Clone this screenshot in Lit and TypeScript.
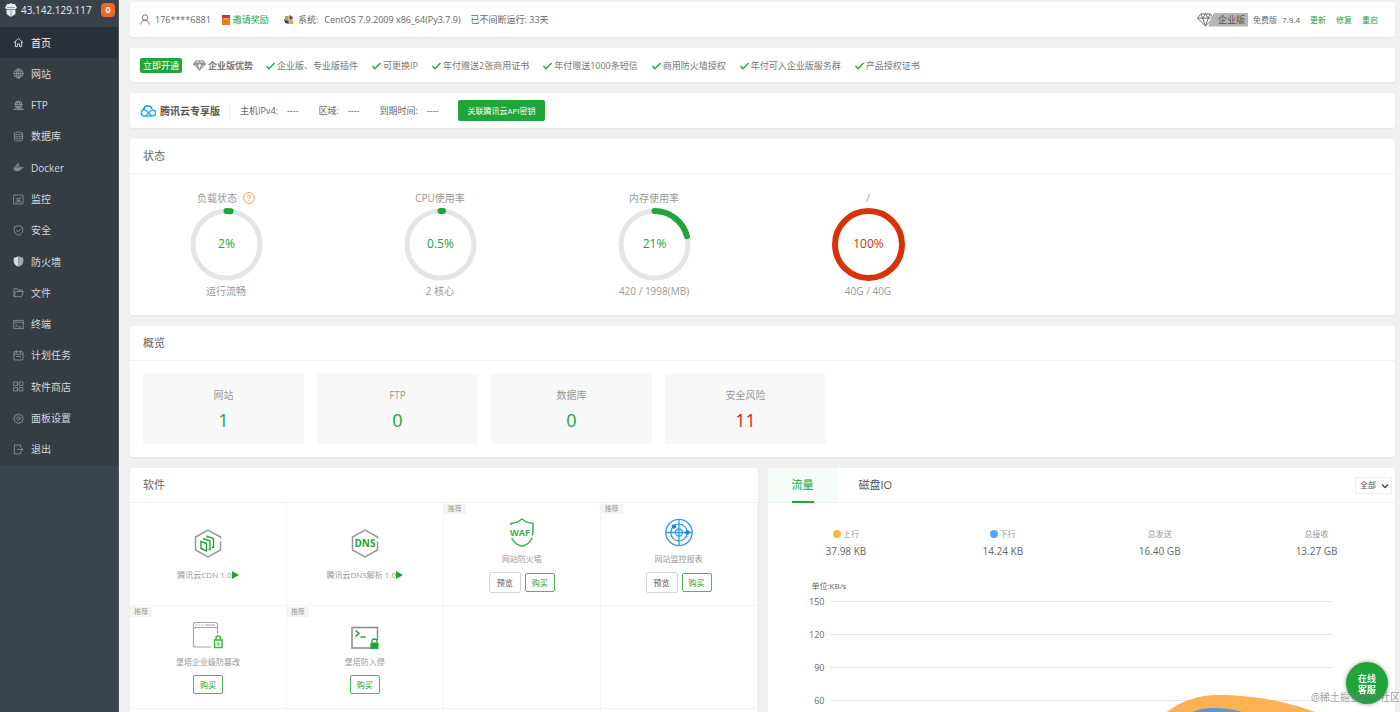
import { LitElement, html, svg, css } from "lit";
import { customElement, property, state } from "lit/decorators.js";
import { classMap } from "lit/directives/class-map.js";

const stroke = (body: unknown) => html`<svg viewBox="0 0 16 16" fill="none" stroke="currentColor" stroke-width="1.4" stroke-linejoin="round" stroke-linecap="round" aria-hidden="true">${body}</svg>`;

const menu = [
  { label: "首页", icon: stroke(svg`<path d="M1.500 8 8 2l6.500 6M3.500 7v7h3v-4h3v4h3V7"/>`) },
  { label: "网站", icon: stroke(svg`<circle cx="8" cy="8" r="6.500"/><ellipse cx="8" cy="8" rx="3" ry="6.500"/><path d="M1.500 8h13M8 1.500v13M2.500 4.500h11M2.500 11.500h11"/>`) },
  { label: "FTP", icon: stroke(svg`<circle cx="8" cy="6.500" r="5"/><ellipse cx="8" cy="6.500" rx="2.200" ry="5"/><path d="M3 6.500h10M3.500 4h9M4 9.500h8M1 13.800h14M3 11.800h10"/>`) },
  { label: "数据库", icon: stroke(svg`<ellipse cx="8" cy="3.500" rx="6" ry="2"/><path d="M2 3.500v9c0 1.200 2.700 2 6 2s6-.8 6-2v-9M2 6.500c0 1.200 2.700 2 6 2s6-.8 6-2M2 9.500c0 1.200 2.700 2 6 2s6-.8 6-2"/>`) },
  { label: "Docker", icon: html`<svg viewBox="0 0 16 16" fill="currentColor" aria-hidden="true"><path d="M.5 8.500h11.200c.5-.8.4-1.800 0-2.500.9.300 1.300.9 1.500 1.500.8-.3 1.800-.2 2.500.3-.5 1-1.600 1.400-2.700 1.300C11.800 12 9.500 13.500 6 13.500 2.500 13.500.7 11.800.5 8.500zM2 6h2v2H2zm2.300 0h2v2h-2zm2.300 0h2v2h-2zm2.300 0h2v2h-2zM4.300 3.800h2v2h-2zm2.300 0h2v2h-2zm0-2.300h2v2h-2z"/></svg>` },
  { label: "监控", icon: stroke(svg`<rect x="1.500" y="1.500" width="13" height="13"/><path d="M4 11.500h8M5 8l2-2.500L9 8l2-3M6 9.500h4"/>`) },
  { label: "安全", icon: stroke(svg`<path d="M8 1.200 14 3v5c0 3.300-2.500 5.600-6 7-3.500-1.400-6-3.700-6-7V3z"/><path d="m5 7.800 2.300 2.300L11.200 6"/>`) },
  { label: "防火墙", icon: html`<svg class="bright" viewBox="0 0 16 16" aria-hidden="true"><path fill="#d8dadb" d="M8 .5 1 3v5c0 3.800 3 6.300 7 7.800z"/><path fill="#a5a9ac" d="M8 .5 15 3v5c0 3.800-3 6.300-7 7.800z"/></svg>` },
  { label: "文件", icon: stroke(svg`<path d="M1.500 13.500v-11h4.500l1.500 2h6v2M1.500 13.500l2.500-7h11l-2 7z"/>`) },
  { label: "终端", icon: stroke(svg`<rect x="1" y="2" width="14" height="12"/><path d="M1 4.800h14M3.500 7.500l2.500 2-2.500 2M8 11.500h4"/>`) },
  { label: "计划任务", icon: stroke(svg`<rect x="1.500" y="2.500" width="13" height="12" rx="1"/><path d="M1.500 6h13M5 1v3M11 1v3M5 9.500h6"/>`) },
  { label: "软件商店", icon: stroke(svg`<rect x="1.500" y="1.500" width="5" height="5"/><rect x="9.500" y="1.500" width="5" height="5"/><rect x="1.500" y="9.500" width="5" height="5"/><rect x="9.500" y="9.500" width="5" height="5"/>`) },
  { label: "面板设置", icon: stroke(svg`<path d="M6.500 1.500h3l.6 1.800 1.900-.6 1.700 1.700-.7 1.900 1.700.6v3l-1.700.5.7 1.900-1.700 1.700-1.900-.7-.6 1.700h-3l-.6-1.700-1.900.7-1.700-1.700.7-1.900L1.300 9.900v-3L3 6.300l-.7-1.900L4 2.700l1.900.6z"/><circle cx="8" cy="8" r="2.300"/>`) },
  { label: "退出", icon: stroke(svg`<path d="M11 4.500V1.500H2v13h9v-3M6.500 8h8M12 5.500 14.500 8 12 10.500"/>`) },
];

const perks = ["企业版、专业版插件", "可更换IP", "年付赠送2张商用证书", "年付赠送1000条短信", "商用防火墙授权", "年付可入企业版服务群", "产品授权证书"];

const hosts = [["主机IPv4:", "----"], ["区域:", "----"], ["到期时间:", "----"]];

const gauges = [
  { title: "负载状态", help: true, text: "2%", value: 2, note: "运行流畅" },
  { title: "CPU使用率", text: "0.5%", value: 0.5, note: "2 核心" },
  { title: "内存使用率", text: "21%", value: 21, note: "420 / 1998(MB)" },
  { title: "/", text: "100%", value: 100, note: "40G / 40G" },
];

const counts = [
  { label: "网站", value: 1 },
  { label: "FTP", value: 0 },
  { label: "数据库", value: 0 },
  { label: "安全风险", value: 11, alert: true },
];

const hexagon = svg`<path d="M26.500 9.500V8L14 1 1.500 8v13L14 28l12.500-7v-8.500" fill="none" stroke="#999" stroke-width="1.500"/>`;

const apps = [
  {
    name: "腾讯云CDN 1.0", running: true,
    icon: html`<svg viewBox="0 0 28 29" aria-hidden="true">${hexagon}<g fill="none" stroke="#20a53a" stroke-width="1.400"><path d="M7 12.500 12.500 14.500v7.500L7 19.500z"/><path d="M10 11V9.800L16 12v8.500h-1.500M13 8.500V7.200L19.500 9.500v9H18"/></g></svg>`,
  },
  {
    name: "腾讯云DNS解析 1.0", running: true,
    icon: html`<svg viewBox="0 0 28 29" aria-hidden="true">${hexagon}<text x="14" y="18.300" text-anchor="middle" font-size="10" font-weight="700" fill="#20a53a">DNS</text></svg>`,
  },
  {
    name: "网站防火墙", badge: true, preview: true, buy: true,
    icon: html`<svg viewBox="0 0 28 29" aria-hidden="true"><g fill="none" stroke="#3fae54" stroke-width="1.500"><path d="M3 7V5.500C7.500 5 11 3.500 14 1c3 2.500 6.500 4 11 4.500 0 5 .2 9-.7 12"/><path d="M3.800 20C5.500 24 9.500 27 14 28.300c4.500-1.300 8.500-4.300 10.300-8.500"/></g><text x="12" y="17.800" text-anchor="middle" font-size="9" font-weight="700" fill="#3fae54">WAF</text></svg>`,
  },
  {
    name: "网站监控报表", badge: true, preview: true, buy: true,
    icon: html`<svg viewBox="0 0 28 29" aria-hidden="true"><g fill="none" stroke="#2f9be0" stroke-width="1.300"><circle cx="14" cy="14.500" r="13.200"/><circle cx="14" cy="14.500" r="8.300"/><circle cx="14" cy="14.500" r="3.500"/><path d="M14 1v27M1 14.500h26"/></g><circle cx="9" cy="8.500" r="2.200" fill="#2184cf"/><circle cx="22.500" cy="14.500" r="2.200" fill="#2184cf"/></svg>`,
  },
  {
    name: "堡塔企业级防篡改", badge: true, buy: true,
    icon: html`<svg class="wide" viewBox="0 0 31 28" aria-hidden="true"><g fill="none" stroke="#a5a5ad" stroke-width="1.200"><path d="M19 25.500H3.500q-2 0-2-2V3q0-2 2-2h20q2 0 2 2v9M1.500 6h24"/><path d="M4 3.500h1.500M7 3.500h1.500M10 3.500h1.500M13 3.500h10"/></g><g fill="none" stroke="#3dbb3d" stroke-width="1.500"><rect x="22.500" y="18.500" width="7.500" height="7.500"/><path d="M24 18.500v-2q0-2 2.200-2t2.200 2v2M26.200 21v3"/></g></svg>`,
  },
  {
    name: "堡塔防入侵", badge: true, buy: true,
    icon: html`<svg viewBox="0 0 28 29" aria-hidden="true"><path d="M20 27H1V6.500h25.500V19" fill="none" stroke="#8b8b8b" stroke-width="1.500"/><path d="m4.500 9.500 3.500 3-3.500 3M9.500 16h5" fill="none" stroke="#20a53a" stroke-width="1.600"/><path d="M19.500 21.500h8V28h-8z" fill="#20a53a"/><path d="M21 21.500V20q0-2 2.500-2t2.500 2v1.500" fill="none" stroke="#20a53a" stroke-width="1.300"/></svg>`,
  },
];

const traffic = [
  { label: "上行", value: "37.98 KB", tone: "up" },
  { label: "下行", value: "14.24 KB", tone: "down" },
  { label: "总发送", value: "16.40 GB" },
  { label: "总接收", value: "13.27 GB" },
];

const sansStack = css`"Open Sans", "Noto Sans CJK SC", sans-serif`;

@customElement("usage-gauge")
class UsageGauge extends LitElement {
  @property({ type: Number }) value = 0;
  @property() text = "";

  static styles = css`
    :host { display: block; width: 73px; height: 73px; }
    svg { display: block; width: 100%; height: 100%; }
    .track { fill: none; stroke: #e5e5e5; stroke-width: 5; }
    .arc { fill: none; stroke: #20a53a; stroke-width: 6; stroke-linecap: round; }
    .full { stroke: #d9320a; }
    text { font-family: ${sansStack}; font-size: 12px; fill: #20a53a; text-anchor: middle; }
    .hot { fill: #d9320a; }
  `;

  render() {
    const full = this.value >= 100;
    const length = Math.max(this.value, 1.2);
    return html`<svg viewBox="0 0 73 73" role="img" aria-label=${this.text}>
      <circle class="track" cx="36.5" cy="36.5" r="33.5"></circle>
      <circle class=${classMap({ arc: true, full })} cx="36.5" cy="36.5" r="33.5" pathLength="100"
        stroke-dasharray="${length} ${100 - length}" transform="rotate(-90 36.5 36.5)"></circle>
      <text class=${classMap({ hot: full })} x="36.5" y="40">${this.text}</text>
    </svg>`;
  }
}

@customElement("app-root")
class AppRoot extends LitElement {
  @state() active = "首页";
  @state() tab = "流量";

  static styles = css`
    :host {
      display: grid; grid-template-columns: 119px minmax(0, 1fr); height: 100vh; overflow: hidden;
      background: #f0f0f0; color: #666; font: 9px/14px ${sansStack};
    }
    * { box-sizing: border-box; }
    a { color: inherit; text-decoration: none; }
    button, select { font: inherit; cursor: pointer; }
    svg { display: block; flex: none; }
    h2 { margin: 0; font-size: 11px; font-weight: 400; }

    .side { background: #3c444d; color: #d5d8da; border-right: 1px solid #51585e; }
    .brand { display: flex; align-items: center; height: 27px; padding: 0 3px 8px 5px; font-size: 10px; color: #eceeef; background: #3a4249; }
    .brand svg { width: 12px; height: 14px; margin-right: 4px; }
    .brand .count { margin-left: auto; width: 14px; height: 14px; border-radius: 4px; background: #f0692a; color: #fff; font-size: 9px; font-weight: 700; text-align: center; }
    .menu { display: flex; flex-direction: column; height: 438px; background: #353d43; }
    .menu a { flex: 1; display: flex; align-items: center; gap: 7px; padding-left: 13px; font-size: 10px; }
    .menu svg { width: 11px; height: 11px; opacity: .5; }
    .menu .bright { opacity: 1; }
    .menu .current { background: #2a3138; color: #f4f5f5; }
    .menu .current svg { opacity: .85; }

    .main { display: flex; flex-direction: column; gap: 11px; padding: 2px 5px 0 11px; overflow-y: auto; scrollbar-width: none; }
    .card { flex: none; background: #fff; border-radius: 3px; box-shadow: 0 1px 2px #0000000d; }
    .line { display: flex; align-items: center; padding: 0 10px; white-space: nowrap; }
    .head { display: flex; align-items: center; height: 35px; padding: 0 13px; border-bottom: 1px solid #f2f2f2; }

    .info { height: 35px; padding-right: 17px; }
    .info .item { display: flex; align-items: center; }
    .info .user { gap: 5px; margin-right: 11px; }
    .info .invite { gap: 3px; margin-right: 15px; color: #20a53a; }
    .info .system { gap: 4px; margin-right: 10px; }
    .info .system .os { margin-left: 2px; }
    .info .edition { margin-left: auto; font-size: 8px; }
    .info .tier { height: 14px; padding: 0 3px 0 10px; margin-left: -6px; background: #b5b5b5; clip-path: polygon(6px 0, 100% 0, 100% 100%, 0 100%); color: #555; font-size: 9px; }
    .info .free { margin: 0 5px; }
    .info .edition a { margin-left: 10px; color: #20a53a; }

    .promo { height: 34px; padding-top: 1px; color: #777; }
    .open { height: 15px; padding: 0 3px; border: 0; border-radius: 2px; background: #20a53a; color: #fff; line-height: 15px; }
    .adv { display: flex; align-items: center; gap: 2px; margin: 0 13px 0 11px; font-weight: 700; }
    .perks { display: flex; gap: 14px; margin: 0; padding: 0; list-style: none; }
    .perks li { display: flex; align-items: center; gap: 2px; }

    .cloud { height: 35px; }
    .cloud strong { font-size: 10px; padding: 0 9px 0 4px; border-right: 1px solid #eee; margin-right: 10px; color: #555; }
    .cloud .host { display: flex; gap: 9px; margin-right: 20px; }
    .bind { height: 21px; padding: 0 9px; border: 0; border-radius: 2px; background: #20a53a; color: #fff; font-size: 8px; }

    .gauges { display: flex; gap: 22px; height: 141px; padding-top: 16px; color: #999; font-size: 10px; line-height: 16px; }
    .gauge { width: 192px; display: flex; flex-direction: column; align-items: center; gap: 2px; }
    .gauge .name { display: flex; align-items: center; gap: 6px; }

    .counts { display: flex; gap: 13px; padding: 13px; height: 96px; }
    .count-box { width: 161px; height: 70px; padding-top: 12px; background: #f8f8f8; text-align: center; color: #999; font-size: 10px; line-height: 18px; }
    .count-box .num { display: block; margin-top: 4px; font-size: 18px; line-height: 24px; color: #20a53a; }
    .count-box .alert { color: #f01414; }

    .pair { flex: none; display: grid; grid-template-columns: 1fr 1fr; gap: 10px; }
    .apps { display: grid; grid-template-columns: repeat(4, 1fr); grid-auto-rows: 103px; }
    .app { position: relative; display: flex; flex-direction: column; align-items: center; padding-top: 15px; border-right: 1px solid #f4f4f4; border-bottom: 1px solid #f4f4f4; font-size: 8px; color: #999; }
    .app.bare { padding-top: 26px; }
    .app svg { width: 28px; height: 29px; }
    .app .wide { width: 31px; height: 29px; }
    .app .name { display: flex; align-items: center; margin: 5px 0 6px; line-height: 14px; }
    .bare .name { margin-top: 10px; }
    .app .name .play { width: 7px; height: 8px; }
    .badge { position: absolute; left: 0; top: 1px; width: 22px; background: #f4f4f4; font-size: 7px; line-height: 10px; text-align: center; }
    .acts { display: flex; align-items: center; gap: 4px; }
    .buy, .preview { padding: 0; border-radius: 2px; background: #fff; line-height: 14px; }
    .buy { width: 30px; height: 19px; border: 1px solid #4cb760; color: #20a53a; }
    .preview { width: 32px; height: 21px; border: 1px solid #d5d5d5; color: #555; }

    .tabs { padding: 0 3px 0 0; }
    .tab { position: relative; height: 34px; padding: 0 24px; margin-right: -3px; border: 0; background: none; color: #555; font-size: 11px; }
    .tab.on { background: #f6fcf7; color: #20a53a; }
    .tab.on::after { content: ""; position: absolute; left: 24px; right: 24px; bottom: -1px; height: 2px; background: #20a53a; }
    .filter { position: relative; margin-left: auto; }
    .filter select { appearance: none; width: 37px; height: 17px; padding: 0 0 0 4px; border: 1px solid #eee; border-radius: 0; background: #fff; color: #555; font-size: 8px; }
    .filter svg { position: absolute; right: 3px; top: 5px; pointer-events: none; }
    .stats { display: grid; grid-template-columns: repeat(4, 1fr); padding-top: 23px; text-align: center; font-size: 8px; color: #999; }
    .stats .label { display: flex; align-items: center; justify-content: center; gap: 2px; height: 16px; }
    .stats .value { display: block; font-size: 10px; line-height: 18px; color: #666; }
    .dot { width: 8px; height: 8px; border-radius: 50%; }
    .up { background: #f7b851; }
    .down { background: #52a9ff; }
    .chart { position: relative; padding: 18px 63px 0 38px; }
    .unit { padding-left: 6px; line-height: 16px; font-size: 8px; }
    .tick { display: grid; grid-template-columns: 19px 1fr; align-items: center; gap: 5px; height: 33px; text-align: right; }
    .ticks { margin-top: -9px; }
    .tick i { height: 1px; background: #e6e6e6; }
    .area { position: absolute; left: 62px; right: 63px; top: 134px; width: calc(100% - 125px); height: 120px; }

    .service { position: fixed; right: 12px; bottom: 8px; width: 42px; height: 42px; padding: 2px 8px 0; border: 0; border-radius: 50%; background: #20a53a; box-shadow: 0 0 4px #0006; color: #fff; font-size: 9px; font-weight: 700; line-height: 11px; }
    .mark { position: fixed; right: 0; bottom: 7px; font-size: 10px; line-height: 16px; color: #777b; white-space: nowrap; }
  `;

  private gem(width: number, height: number, fill = "none") {
    return html`<svg width=${width} height=${height} viewBox="0 0 18 15" fill=${fill} stroke="currentColor" stroke-linejoin="round" aria-hidden="true">
      <path d="M4 1h10l3.500 4.500L9 14 .5 5.500zM.5 5.500h17M4 1l2 4.500L9 14l3-8.500L14 1M6 5.500 9 1l3 4.500"/></svg>`;
  }

  private renderSide() {
    return html`<aside class="side">
      <div class="brand">
        <svg viewBox="0 0 12 14" fill="#e6e8ea" aria-hidden="true"><path d="M6 0 8 1h2l1 2 1 2-1.500 1h-9L0 5l1-2 1-2h2z"/><path d="M1.500 6.500h9V11L6 14 1.500 11z"/><path d="M6 7v7M2 4.500h8" stroke="#7c848a" stroke-width=".7"/></svg>
        <span>43.142.129.117</span><span class="count">0</span>
      </div>
      <nav class="menu">${menu.map((m) => html`
        <a href="#" class=${classMap({ current: this.active === m.label })}
          @click=${(e: Event) => { e.preventDefault(); this.active = m.label; }}>${m.icon}<span>${m.label}</span></a>`)}
      </nav>
    </aside>`;
  }

  private renderBars() {
    return html`
      <header class="card line info">
        <span class="item user"><svg width="10" height="11" viewBox="0 0 10 11" fill="none" stroke="#777" aria-hidden="true"><circle cx="5" cy="3.500" r="2.700"/><path d="M.8 10.500C.8 8 2.500 6.300 5 6.300S9.200 8 9.200 10.500"/></svg>176****6881</span>
        <a class="item invite" href="#"><svg width="8" height="10" viewBox="0 0 8 10" aria-hidden="true"><path fill="#f2762e" d="M0 0h8v10H0z"/><path fill="#d8265c" d="M0 0h8v3H0z"/><path fill="#fbc43c" d="M2.500 3h3v3h-3z"/><path fill="#d8265c" d="M3.500 4h1v3h-1z"/></svg>邀请奖励</a>
        <span class="item system"><svg width="10" height="10" viewBox="0 0 10 10" aria-hidden="true"><path fill="#8fbb3e" d="M1 1h4v4H1z"/><path fill="#8a3b86" d="M5 0l4 2-1 3H5z"/><path fill="#e9a531" d="M5 5h4v4H5z"/><path fill="#343a73" d="M0 4l5 1v4L1 8z"/><path fill="#fff" d="M4.500 1h1v8h-1zM1 4.500h8v1H1z" opacity=".6"/></svg>系统:<span class="os">CentOS 7.9.2009 x86_64(Py3.7.9)</span></span>
        <span>已不间断运行: 33天</span>
        <span class="item edition">${this.gem(17, 14)}<span class="tier">企业版</span><span class="free">免费版</span><span>7.9.4</span><a href="#">更新</a><a href="#">修复</a><a href="#">重启</a></span>
      </header>
      <section class="card line promo">
        <button class="open">立即开通</button>
        <span class="adv">${this.gem(13, 11, "#bbb")}企业版优势</span>
        <ul class="perks">${perks.map((p) => html`<li><svg width="9" height="8" viewBox="0 0 9 8" fill="none" stroke="#20a53a" stroke-width="1.300" aria-hidden="true"><path d="m.5 4 2.500 2.800L8.500 1"/></svg>${p}</li>`)}</ul>
      </section>
      <section class="card line cloud">
        <svg width="16" height="12" viewBox="0 0 16 12" fill="none" stroke-width="1.500" aria-hidden="true"><path stroke="#24b4ea" d="M8 11 4 11a3.200 3.200 0 0 1-.5-6.200C5 4.500 6 5.500 7 6.300l4.500 4.400"/><path stroke="#2a7ff0" d="M3.500 4.500C4 2.300 5.800 1 7.900 1c2 0 3.600 1.200 4.200 3"/><path stroke="#24b4ea" d="M5.500 11 10 6.500c.8-.9 1.600-1.500 2.600-1.500a2.900 2.900 0 0 1 0 6H8"/></svg>
        <strong>腾讯云专享版</strong>
        ${hosts.map(([k, v]) => html`<span class="host"><span>${k}</span><span>${v}</span></span>`)}
        <button class="bind">关联腾讯云API密钥</button>
      </section>`;
  }

  private renderStatus() {
    return html`
      <section class="card">
        <div class="head"><h2>状态</h2></div>
        <div class="gauges">${gauges.map((g) => html`<div class="gauge">
          <span class="name">${g.help ? html`${g.title}<svg width="12" height="12" viewBox="0 0 12 12" fill="none" stroke="#f3a35c" aria-hidden="true"><circle cx="6" cy="6" r="5.400"/><path d="M4.300 4.800Q4.300 3.200 6 3.200t1.700 1.500Q7.700 5.700 6 6.300v1M6 8.200v1"/></svg>` : g.title}</span>
          <usage-gauge .value=${g.value} .text=${g.text}></usage-gauge>
          <span>${g.note}</span></div>`)}
        </div>
      </section>
      <section class="card">
        <div class="head"><h2>概览</h2></div>
        <div class="counts">${counts.map((c) => html`<a class="count-box" href="#">${c.label}<span class=${classMap({ num: true, alert: !!c.alert })}>${c.value}</span></a>`)}</div>
      </section>`;
  }

  private renderApps() {
    return html`<section class="card">
      <div class="head"><h2>软件</h2></div>
      <div class="apps">
        ${apps.map((a: any) => html`<div class=${classMap({ app: true, bare: !a.buy })}>
          ${a.badge ? html`<span class="badge">推荐</span>` : ""}
          ${a.icon}
          <span class="name">${a.name}${a.running ? html`<svg class="play" viewBox="0 0 7 8" fill="#20a53a" aria-hidden="true"><path d="M0 0l7 4-7 4z"/></svg>` : ""}</span>
          ${a.buy ? html`<span class="acts">${a.preview ? html`<button class="preview">预览</button>` : ""}<button class="buy">购买</button></span>` : ""}
        </div>`)}
        ${Array.from({ length: 6 }, () => html`<div class="app"></div>`)}
      </div>
    </section>`;
  }

  private renderTraffic() {
    return html`<section class="card">
      <div class="head tabs">
        ${["流量", "磁盘IO"].map((t) => html`<button class=${classMap({ tab: true, on: this.tab === t })} @click=${() => { this.tab = t; }}>${t}</button>`)}
        <label class="filter"><select aria-label="网卡"><option>全部</option></select><svg width="8" height="8" viewBox="0 0 8 8" fill="none" stroke="#444" stroke-width="1.300" aria-hidden="true"><path d="m1 2.500 3 3 3-3"/></svg></label>
      </div>
      <div class="stats">${traffic.map((s) => html`<div>
        <span class="label">${s.tone ? html`<i class="dot ${s.tone}"></i>` : ""}${s.label}</span><span class="value">${s.value}</span></div>`)}
      </div>
      <div class="chart">
        <div class="unit">单位:KB/s</div>
        <div class="ticks">${[150, 120, 90, 60, 30, 0].map((n) => html`<div class="tick"><span>${n}</span><i></i></div>`)}</div>
        <svg class="area" viewBox="0 0 503 120" preserveAspectRatio="none" aria-hidden="true">
          <path fill="#feb155" d="M285 80C310 45 335 1 388 1c55 0 95 15 115 24v95H260z"/>
          <path fill="#5a9bcc" d="M320 75C340 30 355 14 384 14c40 0 82 25 119 55v51H290z"/>
        </svg>
      </div>
    </section>`;
  }

  render() {
    return html`${this.renderSide()}
      <main class="main">
        ${this.renderBars()}${this.renderStatus()}
        <div class="pair">${this.renderApps()}${this.renderTraffic()}</div>
      </main>
      <button class="service">在线客服</button>
      <span class="mark">@稀土掘金技术社区</span>`;
  }
}
